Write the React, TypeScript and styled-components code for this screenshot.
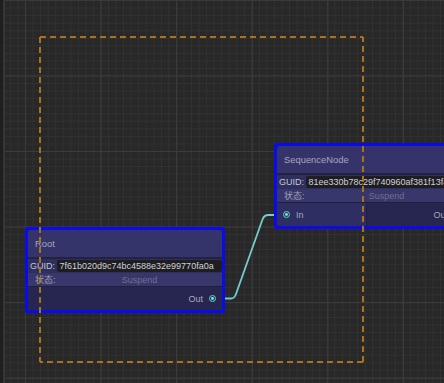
import React from 'react';
import styled, { createGlobalStyle } from 'styled-components';

const Global = createGlobalStyle`
  html, body { margin: 0; padding: 0; background: #282828; overflow: hidden; }
  body { font-family: "Liberation Sans", "Noto Sans CJK SC", sans-serif; }
  #root { width: 444px; height: 383px; }
`;

const Canvas = styled.div`
  position: relative;
  width: 444px;
  height: 383px;
  overflow: hidden;
  background-color: #282828;
  background-image:
    linear-gradient(to right, #3c3c3c 1px, transparent 1px),
    linear-gradient(to bottom, #3c3c3c 1px, transparent 1px),
    linear-gradient(to right, #313131 1px, transparent 1px),
    linear-gradient(to bottom, #313131 1px, transparent 1px);
  background-size: 75.6px 75.6px, 75.6px 75.6px, 7.56px 7.56px, 7.56px 7.56px;
  background-position: 25px 151px;
  box-shadow: inset 3px 0 0 #1f1f1f, inset 5px 0 0 #363636;
`;

const Layer = styled.svg<{ $z: number }>`
  position: absolute;
  left: 0;
  top: 0;
  width: 444px;
  height: 383px;
  pointer-events: none;
  z-index: ${p => p.$z};
`;

const NodeFrame = styled.div<{ $x: number; $y: number; $w: number }>`
  position: absolute;
  left: ${p => p.$x}px;
  top: ${p => p.$y}px;
  width: ${p => p.$w}px;
  box-sizing: border-box;
  border: 3px solid #0a0af0;
  border-radius: 2px;
  z-index: 2;
`;

const NodeBody = styled.div`
  display: flex;
  flex-direction: column;
  border-radius: 4px;
  overflow: hidden;
  background: #30305f;
`;

const Title = styled.div`
  height: 27px;
  display: flex;
  align-items: center;
  padding-left: 7px;
  background: #34346a;
  color: #a6a6bc;
  font-size: 9.4px;
  border-bottom: 2px solid #23233f;
  white-space: nowrap;
`;

const FieldRow = styled.div<{ $h: number; $bg: string }>`
  height: ${p => p.$h}px;
  display: grid;
  grid-template-columns: 29px 1fr;
  align-items: center;
  background: ${p => p.$bg};
  font-size: 9px;
  white-space: nowrap;
`;

const RowLabel = styled.span<{ $indent: number; $color: string }>`
  padding-left: ${p => p.$indent}px;
  color: ${p => p.$color};
  overflow: hidden;
`;

const TextField = styled.div`
  height: 12px;
  line-height: 12px;
  background: #1e1e22;
  border-radius: 2px;
  padding-left: 2.5px;
  color: #d2d2d6;
  overflow: hidden;
`;

const ValueText = styled.div`
  text-align: center;
  color: #70708e;
`;

const Divider = styled.div`
  height: 1px;
  background: #20203c;
`;

const PortRow = styled.div`
  height: 23px;
  display: flex;
  font-size: 9px;
  color: #a8a8ba;
`;

const InputSide = styled.div`
  width: 90px;
  display: flex;
  align-items: center;
  gap: 6px;
  padding-left: 6px;
  box-sizing: border-box;
  background: #2e2e62;
  border-right: 1px solid #1f1f40;
`;

const OutputSide = styled.div`
  flex: 1;
  display: flex;
  align-items: center;
  justify-content: flex-end;
  gap: 6px;
  padding-right: 6px;
  background: #262650;
  white-space: nowrap;
`;

const PortDot = () => (
  <svg width="7" height="7" viewBox="0 0 7 7">
    <circle cx="3.5" cy="3.5" r="3" fill="#1f3a48" stroke="#6cc9cc" strokeWidth="1" />
    <circle cx="3.5" cy="3.5" r="1.4" fill="#8fe0e0" />
  </svg>
);

type NodeProps = {
  x: number;
  y: number;
  w: number;
  title: string;
  guid: string;
  hasInput?: boolean;
};

const GraphNode = ({ x, y, w, title, guid, hasInput }: NodeProps) => (
  <NodeFrame $x={x} $y={y} $w={w}>
    <NodeBody>
      <Title>{title}</Title>
      <FieldRow $h={14} $bg="#2f2f5e">
        <RowLabel $indent={2} $color="#c6c6ce">GUID:</RowLabel>
        <TextField>{guid}</TextField>
      </FieldRow>
      <FieldRow $h={13} $bg="#37376c">
        <RowLabel $indent={7} $color="#a0a0b4">状态:</RowLabel>
        <ValueText>Suspend</ValueText>
      </FieldRow>
      <Divider />
      <PortRow>
        {hasInput && (
          <InputSide>
            <PortDot />
            <span>In</span>
          </InputSide>
        )}
        <OutputSide>
          <span>Out</span>
          <PortDot />
        </OutputSide>
      </PortRow>
    </NodeBody>
  </NodeFrame>
);

export default function App() {
  return (
    <>
      <Global />
      <Canvas>
        <Layer $z={1} viewBox="0 0 444 383">
          <path
            d="M213,298.5 L231,298.5 Q234.5,298.5 236,294 L262.5,219.5 Q264,215 268.5,215 L286,215"
            fill="none"
            stroke="#74cccc"
            strokeWidth="1.8"
            strokeLinejoin="round"
          />
        </Layer>
        <GraphNode x={25} y={227} w={200} title="Root" guid="7f61b020d9c74bc4588e32e99770fa0a" />
        <GraphNode x={274} y={143} w={196} title="SequenceNode" guid="81ee330b78c29f740960af381f13f4b2" hasInput />
        <Layer $z={3} viewBox="0 0 444 383">
          <g fill="none" stroke="#aa711f" strokeWidth="2" strokeDasharray="6 4">
            <line x1="40" y1="37" x2="363" y2="37" />
            <line x1="40" y1="37" x2="40" y2="362" />
            <line x1="363" y1="362" x2="363" y2="37" />
            <line x1="363" y1="362" x2="40" y2="362" />
          </g>
        </Layer>
      </Canvas>
    </>
  );
}
